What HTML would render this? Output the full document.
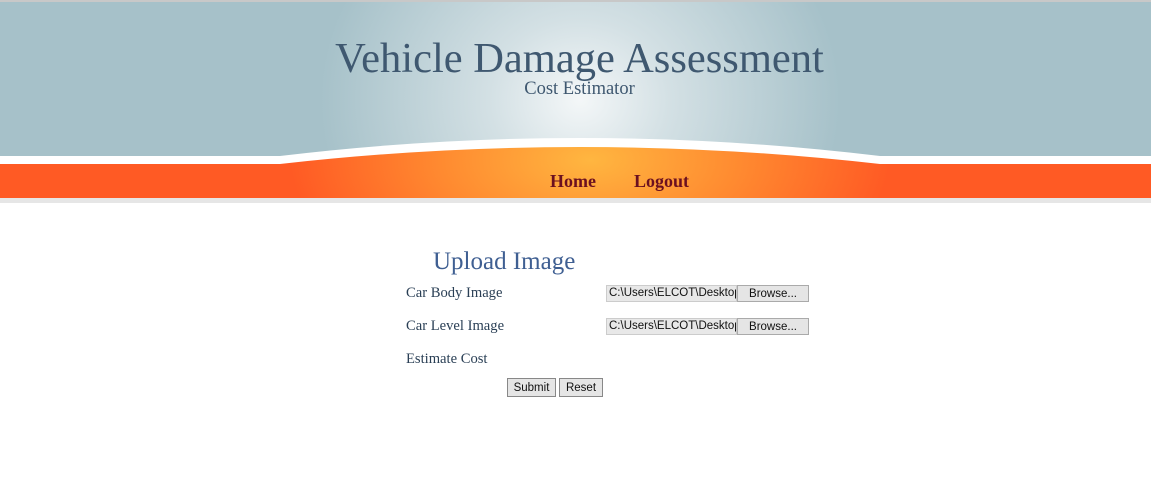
<!DOCTYPE html>
<html><head><style>
body{margin:0;width:1151px;height:497px;background:#fff;font-family:"Liberation Serif",serif;position:relative;overflow:hidden}
.abs{position:absolute}
.lbl{position:absolute;left:406px;font-size:14.6px;color:#2a3f55}
.file{position:absolute;left:606px;width:202px;height:17px;font-family:"Liberation Sans",sans-serif;font-size:11.5px}
.file .t{position:absolute;left:0;top:0;width:131px;height:17px;background:#e8e8e8;border:1px solid #ccc;box-sizing:border-box;overflow:hidden;white-space:nowrap;padding:1px 2px;color:#111}
.file .b{position:absolute;left:131px;top:0;width:72px;height:17px;background:#e5e5e5;border:1px solid #aaa;box-sizing:border-box;text-align:center;line-height:16px;color:#111}
.btn{position:absolute;top:378px;height:19px;background:#e5e5e5;border:1px solid #888;box-sizing:border-box;font-family:"Liberation Sans",sans-serif;font-size:11.5px;text-align:center;line-height:18px;color:#111}
</style></head><body>
<svg class="abs" style="left:0;top:0" width="1151" height="205">
<defs>
<radialGradient id="bg" cx="580" cy="100" r="260" gradientUnits="userSpaceOnUse" gradientTransform="translate(580 100) scale(1 0.9) translate(-580 -100)">
<stop offset="0" stop-color="#f4f7f8"/><stop offset="0.35" stop-color="#d3e0e4"/><stop offset="1" stop-color="#a6c1c9"/></radialGradient>
<radialGradient id="og" cx="590" cy="160" r="300" gradientUnits="userSpaceOnUse" gradientTransform="translate(590 160) scale(1 0.5) translate(-590 -160)">
<stop offset="0" stop-color="#ffb640"/><stop offset="0.5" stop-color="#ff8a30"/><stop offset="1" stop-color="#ff5a24"/></radialGradient>
</defs>
<rect width="1151" height="205" fill="#fff"/>
<rect width="1151" height="156" fill="url(#bg)"/>
<rect width="1151" height="2" fill="#c8c8c8"/>
<path d="M0 156 L280 156 Q580 120 880 156 L1151 156 L1151 164 L0 164Z" fill="#fff"/>
<path d="M0 164 L280 164 Q580 130 880 164 L1151 164 L1151 198 L0 198Z" fill="url(#og)"/>
<rect y="198" width="1151" height="5" fill="#e6e6e6"/>
</svg>
<div class="abs" style="left:0;width:1151px;top:34px;text-align:center;font-size:42.5px;color:#3f5870;padding-left:4px">Vehicle Damage Assessment</div>
<div class="abs" style="left:0;width:1151px;top:79px;text-align:center;font-size:18.5px;color:#3f5870;padding-left:4px">Cost Estimator</div>
<div class="abs" style="left:550px;top:171px;font-size:18px;font-weight:bold;color:#6b1020">Home</div>
<div class="abs" style="left:634px;top:171px;font-size:18px;font-weight:bold;color:#6b1020">Logout</div>
<div class="abs" style="left:433px;top:248px;font-size:25px;color:#3f5f92">Upload Image</div>
<div class="lbl" style="top:285px">Car Body Image</div>
<div class="lbl" style="top:318px">Car Level Image</div>
<div class="lbl" style="top:351px">Estimate Cost</div>
<div class="file" style="top:285px"><div class="t">C:\Users\ELCOT\Desktop</div><div class="b">Browse...</div></div>
<div class="file" style="top:318px"><div class="t">C:\Users\ELCOT\Desktop</div><div class="b">Browse...</div></div>
<div class="btn" style="left:507px;width:49px">Submit</div>
<div class="btn" style="left:559px;width:44px">Reset</div>
</body></html>
